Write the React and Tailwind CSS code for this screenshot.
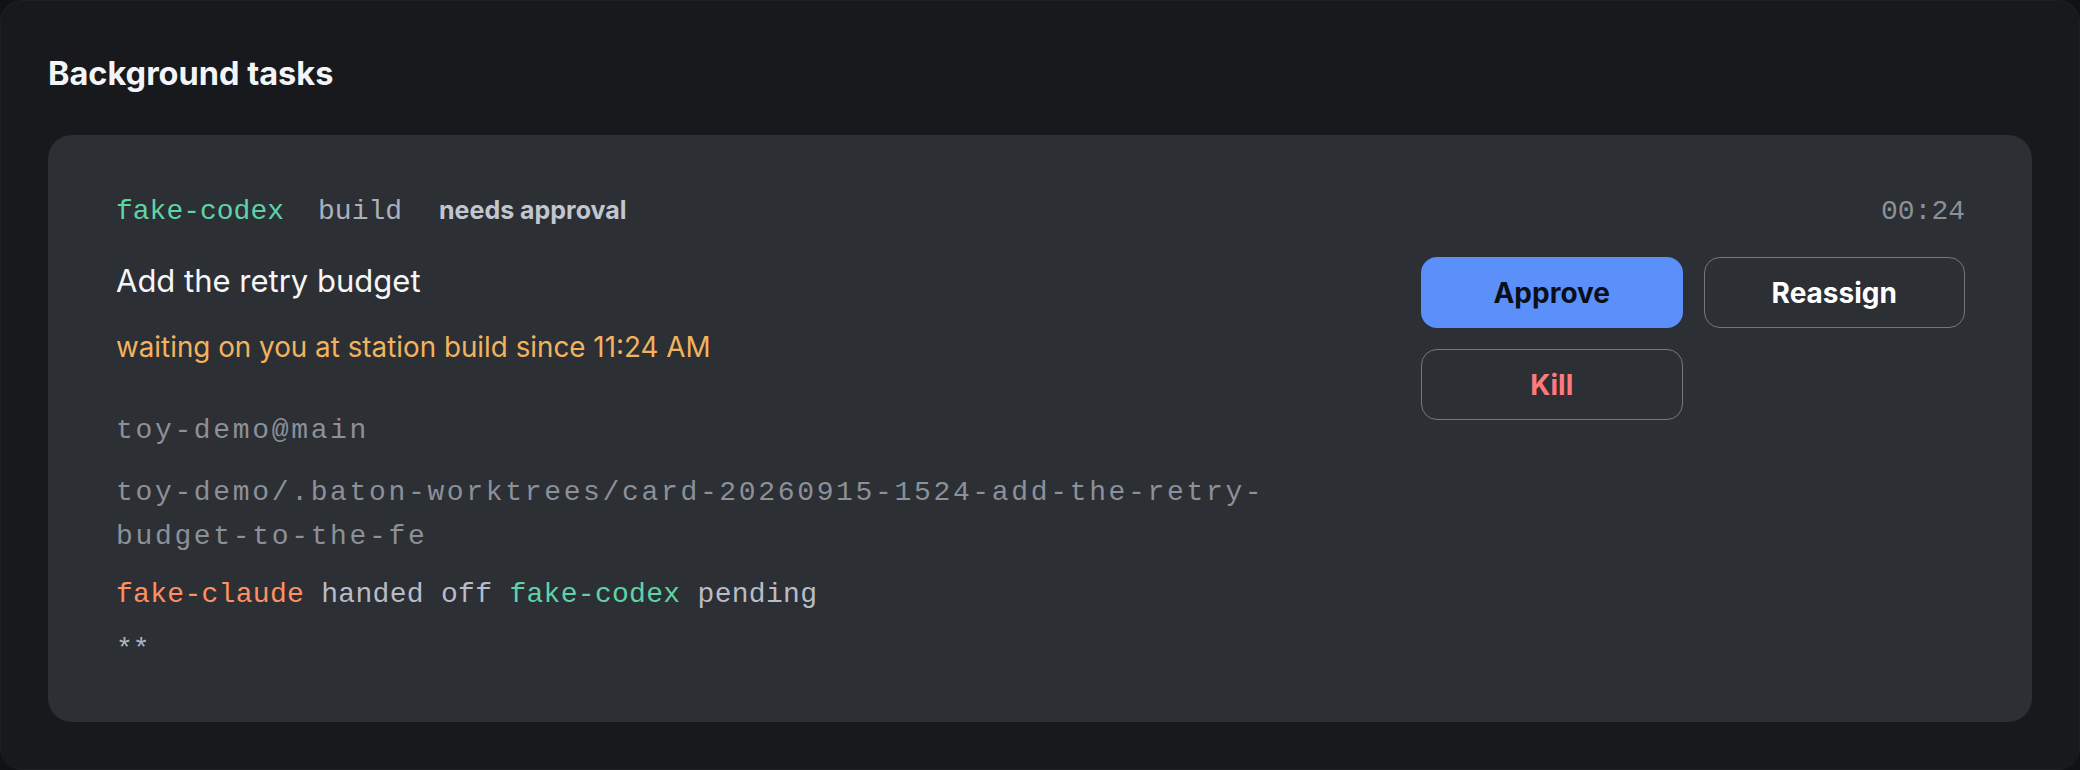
import React from "react";

const mono = "font-['Liberation_Mono',monospace]";
const sans = "font-['Inter',sans-serif]";

const task = {
  agent: "fake-codex",
  station: "build",
  status: "needs approval",
  elapsed: "00:24",
  title: "Add the retry budget",
  waiting: "waiting on you at station build since 11:24 AM",
  repo: "toy-demo@main",
  worktree: "toy-demo/.baton-worktrees/card-20260915-1524-add-the-retry-budget-to-the-fe",
  from: "fake-claude",
  to: "fake-codex",
};

const TaskCard = ({ t }) => {
  return (
    <div className="rounded-[24px] bg-[#2c2f34] pl-[68px] pr-[67px] pt-[59px] pb-[50px]">
      {/* header row */}
      <div className="flex items-baseline justify-between leading-[32px]">
        <div className="flex items-baseline">
          <span className={`${mono} text-[28px] text-[#5fd3a7]`}>{t.agent}</span>
          <span className={`${mono} text-[28px] text-[#aab0bd] ml-[34px]`}>{t.station}</span>
          <span className={`${sans} text-[25px] font-bold text-[#c1c6cf] ml-[37px]`}>{t.status}</span>
        </div>
        <span className={`${mono} text-[28px] text-[#8b9098]`}>{t.elapsed}</span>
      </div>

      <div className="flex items-start mt-[29px]">
        <div className="flex-1 min-w-0 pr-[64px]">
          <div className={`${sans} text-[31px] leading-[36px] text-[#f5f6f8] mt-[6px]`}>{t.title}</div>
          <div className={`${sans} text-[27.8px] leading-[32px] text-[#f2b35e] mt-[32px]`}>{t.waiting}</div>
          <div className={`${mono} text-[28px] leading-[44px] tracking-[0.095em] text-[#8b9099] mt-[46px]`}>{t.repo}</div>
          <div className={`${mono} text-[28px] leading-[44px] tracking-[0.095em] text-[#8b9099] mt-[18px]`}>{t.worktree}</div>
          <div className={`${mono} text-[28px] leading-[44px] tracking-[0.3px] text-[#b8bcc6] mt-[14px]`}>
            <span className="text-[#ff9062]">{t.from}</span> handed off{" "}
            <span className="text-[#5fd3a7]">{t.to}</span> pending
          </div>
          <div className={`${mono} text-[28px] leading-[44px] text-[#aeb3bd] mt-[11px]`}>**</div>
        </div>

        <div className={`${sans} grid grid-cols-2 gap-[21px] w-[544px] shrink-0`}>
          <button className="h-[71px] rounded-[16px] bg-[#5b8ffa] text-[28px] font-bold text-[#0b0f19]">
            Approve
          </button>
          <button className="h-[71px] rounded-[16px] border border-[#74777d] text-[28px] font-bold text-white">
            Reassign
          </button>
          <button className="h-[71px] rounded-[16px] border border-[#74777d] text-[28px] font-bold text-[#ff7a7a]">
            Kill
          </button>
        </div>
      </div>
    </div>
  );
};

export default function App() {
  return (
    <div className="w-[2080px] h-[770px] bg-[#111214]">
      <div className="h-full rounded-[22px] border border-[#1e2124] bg-[#17191c] px-[47px] pt-[55px]">
        <h2 className={`${sans} text-[32.5px] leading-[36px] font-bold text-[#f3f4f7]`}>Background tasks</h2>
        <div className="mt-[43px]">
          <TaskCard t={task} />
        </div>
      </div>
    </div>
  );
}
